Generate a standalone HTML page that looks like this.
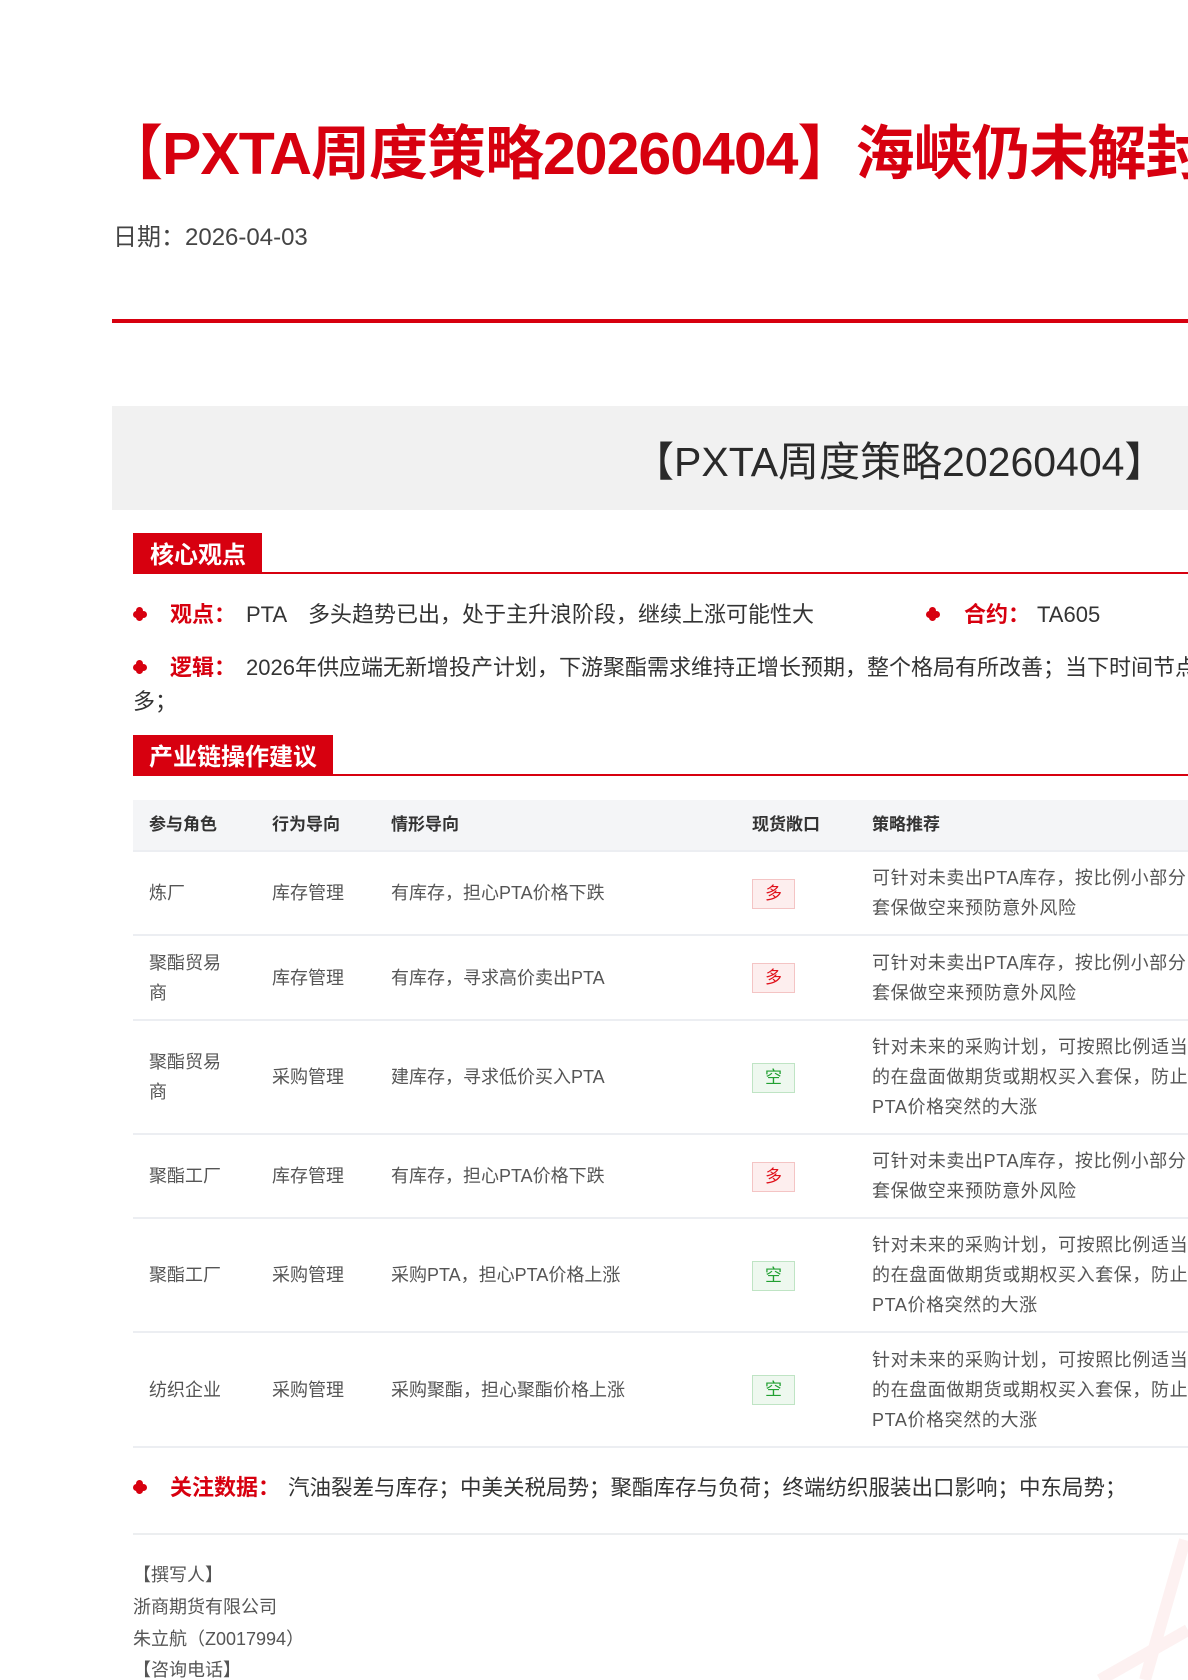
<!DOCTYPE html>
<html><head><meta charset="utf-8"><style>
html,body{margin:0;padding:0;width:1188px;height:1680px;overflow:hidden;background:#fff;}
body{position:relative;font-family:"Liberation Sans","Noto Sans CJK SC",sans-serif;color:#333;}
.a{position:absolute;white-space:nowrap;}
.red{color:#d7000f;}
.bul{position:absolute;width:14px;height:14px;}
.bul i{position:absolute;background:#d7000f;border-radius:50%;width:7px;height:7px;}
table{position:absolute;left:133px;top:800px;border-collapse:collapse;width:1200px;table-layout:fixed;font-size:18px;color:#555;}
td,th{padding:0;vertical-align:middle;text-align:left;border-bottom:2px solid #eceef2;line-height:30px;overflow:hidden;white-space:nowrap;}
th{background:#f4f5f7;font-weight:bold;color:#333;font-size:17px;height:50px;}
td:first-child,th:first-child{padding-left:16px;}
td:last-child{letter-spacing:0.6px;}
.tag{display:inline-block;width:41px;height:28px;line-height:28px;text-align:center;font-size:17px;letter-spacing:0;}
.d{background:#fdeeee;border:1px solid #f4c4c4;color:#e0101a;}
.k{background:#eef8ef;border:1px solid #bfe4c4;color:#22a032;}
</style></head><body>

<div class="a red" style="left:104px;top:116px;font-size:59px;font-weight:bold;line-height:76px;letter-spacing:-1px;">【PXTA周度策略20260404】海峡仍未解封，PTA多头行情延续</div>
<div class="a" style="left:113px;top:223px;font-size:24px;color:#444;line-height:30px;">日期：2026-04-03</div>
<div class="a" style="left:112px;top:319px;width:1100px;height:4px;background:#d7000f;"></div>

<div class="a" style="left:112px;top:406px;width:1100px;height:104px;background:#f1f1f1;"></div>
<div class="a" style="left:633px;top:434px;font-size:41px;color:#2a2a2a;line-height:56px;">【PXTA周度策略20260404】</div>

<div class="a" style="left:133px;top:533px;width:129px;height:40px;background:#d7000f;"></div>
<div class="a" style="left:150px;top:540px;font-size:24px;font-weight:bold;color:#fff;line-height:32px;">核心观点</div>
<div class="a" style="left:133px;top:572px;width:1100px;height:2px;background:#d7000f;"></div>

<div class="bul" style="left:133px;top:607px;"><i style="left:3px;top:0"></i><i style="left:0;top:4px"></i><i style="left:7px;top:4px"></i><i style="left:3px;top:7px"></i></div>
<div class="a red" style="left:170px;top:600px;font-size:22px;font-weight:bold;line-height:30px;">观点：</div>
<div class="a" style="left:246px;top:600px;font-size:22px;line-height:30px;">PTA　多头趋势已出，处于主升浪阶段，继续上涨可能性大</div>
<div class="bul" style="left:926px;top:607px;"><i style="left:3px;top:0"></i><i style="left:0;top:4px"></i><i style="left:7px;top:4px"></i><i style="left:3px;top:7px"></i></div>
<div class="a red" style="left:964px;top:600px;font-size:22px;font-weight:bold;line-height:30px;">合约：</div>
<div class="a" style="left:1037px;top:600px;font-size:22px;line-height:30px;">TA605</div>

<div class="bul" style="left:133px;top:660px;"><i style="left:3px;top:0"></i><i style="left:0;top:4px"></i><i style="left:7px;top:4px"></i><i style="left:3px;top:7px"></i></div>
<div class="a red" style="left:170px;top:653px;font-size:22px;font-weight:bold;line-height:30px;">逻辑：</div>
<div class="a" style="left:246px;top:653px;font-size:22px;line-height:30px;">2026年供应端无新增投产计划，下游聚酯需求维持正增长预期，整个格局有所改善；当下时间节点星</div>
<div class="a" style="left:133px;top:687px;font-size:22px;line-height:30px;">多；</div>

<div class="a" style="left:133px;top:735px;width:200px;height:40px;background:#d7000f;"></div>
<div class="a" style="left:149px;top:742px;font-size:24px;font-weight:bold;color:#fff;line-height:32px;">产业链操作建议</div>
<div class="a" style="left:133px;top:774px;width:1100px;height:2px;background:#d7000f;"></div>

<table>
<colgroup><col style="width:139px"><col style="width:119px"><col style="width:361px"><col style="width:120px"><col style="width:461px"></colgroup>
<tr><th>参与角色</th><th>行为导向</th><th>情形导向</th><th>现货敞口</th><th>策略推荐</th></tr>
<tr style="height:84px"><td>炼厂</td><td>库存管理</td><td>有库存，担心PTA价格下跌</td><td><span class="tag d">多</span></td><td>可针对未卖出PTA库存，按比例小部分<br>套保做空来预防意外风险</td></tr>
<tr style="height:85px"><td>聚酯贸易<br>商</td><td>库存管理</td><td>有库存，寻求高价卖出PTA</td><td><span class="tag d">多</span></td><td>可针对未卖出PTA库存，按比例小部分<br>套保做空来预防意外风险</td></tr>
<tr style="height:114px"><td>聚酯贸易<br>商</td><td>采购管理</td><td>建库存，寻求低价买入PTA</td><td><span class="tag k">空</span></td><td>针对未来的采购计划，可按照比例适当<br>的在盘面做期货或期权买入套保，防止<br>PTA价格突然的大涨</td></tr>
<tr style="height:84px"><td>聚酯工厂</td><td>库存管理</td><td>有库存，担心PTA价格下跌</td><td><span class="tag d">多</span></td><td>可针对未卖出PTA库存，按比例小部分<br>套保做空来预防意外风险</td></tr>
<tr style="height:114px"><td>聚酯工厂</td><td>采购管理</td><td>采购PTA，担心PTA价格上涨</td><td><span class="tag k">空</span></td><td>针对未来的采购计划，可按照比例适当<br>的在盘面做期货或期权买入套保，防止<br>PTA价格突然的大涨</td></tr>
<tr style="height:115px"><td>纺织企业</td><td>采购管理</td><td>采购聚酯，担心聚酯价格上涨</td><td><span class="tag k">空</span></td><td>针对未来的采购计划，可按照比例适当<br>的在盘面做期货或期权买入套保，防止<br>PTA价格突然的大涨</td></tr>
</table>

<div class="bul" style="left:133px;top:1480px;"><i style="left:3px;top:0"></i><i style="left:0;top:4px"></i><i style="left:7px;top:4px"></i><i style="left:3px;top:7px"></i></div>
<div class="a red" style="left:170px;top:1473px;font-size:22px;font-weight:bold;line-height:30px;">关注数据：</div>
<div class="a" style="left:288px;top:1473px;font-size:21.5px;line-height:30px;">汽油裂差与库存；中美关税局势；聚酯库存与负荷；终端纺织服装出口影响；中东局势；</div>

<div class="a" style="left:133px;top:1533px;width:1100px;height:2px;background:#eceef0;"></div>

<div class="a" style="left:133px;top:1562px;font-size:18px;color:#555;line-height:26px;">【撰写人】</div>
<div class="a" style="left:133px;top:1594px;font-size:18px;color:#555;line-height:26px;">浙商期货有限公司</div>
<div class="a" style="left:133px;top:1626px;font-size:18px;color:#555;line-height:26px;">朱立航（Z0017994）</div>
<div class="a" style="left:133px;top:1657px;font-size:18px;color:#555;line-height:26px;">【咨询电话】</div>

<svg class="a" style="left:980px;top:1520px" width="208" height="160"><path d="M205 20 L165 160 M208 110 L120 160" stroke="#fdf1f1" stroke-width="12" fill="none"/></svg>
</body></html>
